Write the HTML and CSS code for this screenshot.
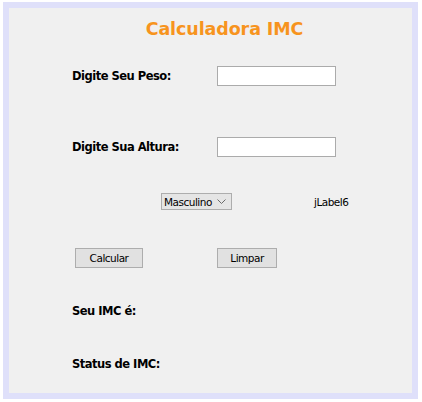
FILE: index.html
```html
<!DOCTYPE html>
<html lang="pt">
<head>
<meta charset="utf-8">
<title>Calculadora IMC</title>
<link rel="stylesheet" href="styles.css">
</head>
<body>
<div class="frame">
  <h1 class="title">Calculadora IMC</h1>
  <div class="form">
    <div class="row row-peso">
      <span class="label">Digite Seu Peso:</span>
      <input class="field" type="text">
    </div>
    <div class="row row-altura">
      <span class="label">Digite Sua Altura:</span>
      <input class="field" type="text">
    </div>
    <div class="row row-sexo">
      <div class="combo">
        <span class="combo-text">Masculino</span>
        <svg class="chev" width="9" height="5" viewBox="0 0 9 5"><path d="M0.5 0.5 L4.5 4.5 L8.5 0.5" fill="none" stroke="#6a6a6a" stroke-width="1"/></svg>
      </div>
      <span class="jlabel">jLabel6</span>
    </div>
    <div class="row row-buttons">
      <button class="btn btn-calc" type="button">Calcular</button>
      <button class="btn btn-limpar" type="button">Limpar</button>
    </div>
    <div class="row row-imc">
      <span class="label">Seu IMC é:</span>
    </div>
    <div class="row row-status">
      <span class="label">Status de IMC:</span>
    </div>
  </div>
</div>
</body>
</html>
```
FILE: styles.css
```css
html, body {
  margin: 0;
  padding: 0;
  background: #ffffff;
}
body {
  width: 422px;
  height: 402px;
  overflow: hidden;
  font-family: "DejaVu Sans", sans-serif;
}
.frame {
  box-sizing: border-box;
  margin: 2px 0 0 3px;
  width: 415px;
  height: 397px;
  border: 6px solid #dfe0fa;
  background: #f0f0f0;
}
.title {
  margin: 10px 0 0 0;
  height: 22px;
  line-height: 22px;
  text-align: center;
  font-family: "DejaVu Sans", sans-serif;
  font-weight: bold;
  font-size: 17.5px;
  color: #f7941e;
  padding-left: 28px;
  letter-spacing: -0.1px;
}
.form {
  padding-left: 63px;
}
.row {
  display: flex;
  align-items: center;
  height: 20px;
}
.label {
  font-weight: bold;
  font-size: 11.5px;
  color: #000;
  width: 145px;
  white-space: nowrap;
  letter-spacing: -0.5px;
}
.field {
  box-sizing: border-box;
  width: 119px;
  height: 20px;
  margin: 0;
  border: 1px solid #ababab;
  background: #fff;
  padding: 0;
}
.row-peso { margin-top: 26px; }
.row-altura { margin-top: 51px; }
.row-sexo { margin-top: 36px; height: 17px; padding-left: 89px; }
.combo {
  box-sizing: border-box;
  width: 71px;
  height: 17px;
  border: 1px solid #adadad;
  background: #e5e5e5;
  display: flex;
  align-items: center;
  padding-left: 2px;
  font-size: 10.5px;
  color: #000;
}
.combo-text { flex: 1; letter-spacing: -0.5px; }
.chev { margin-right: 5px; }
.jlabel {
  margin-left: 82px;
  font-size: 10.5px;
  color: #000;
  letter-spacing: -0.5px;
}
.row-buttons { margin-top: 38px; }
.btn {
  box-sizing: border-box;
  height: 20px;
  margin: 0;
  padding: 0;
  border: 1px solid #adadad;
  background: #e1e1e1;
  font-family: "DejaVu Sans", sans-serif;
  font-size: 10.5px;
  color: #000;
  letter-spacing: -0.5px;
}
.btn-calc { width: 68px; margin-left: 3px; }
.btn-limpar { width: 60px; margin-left: 74px; }
.row-imc { margin-top: 33px; }
.row-status { margin-top: 33px; }
```
